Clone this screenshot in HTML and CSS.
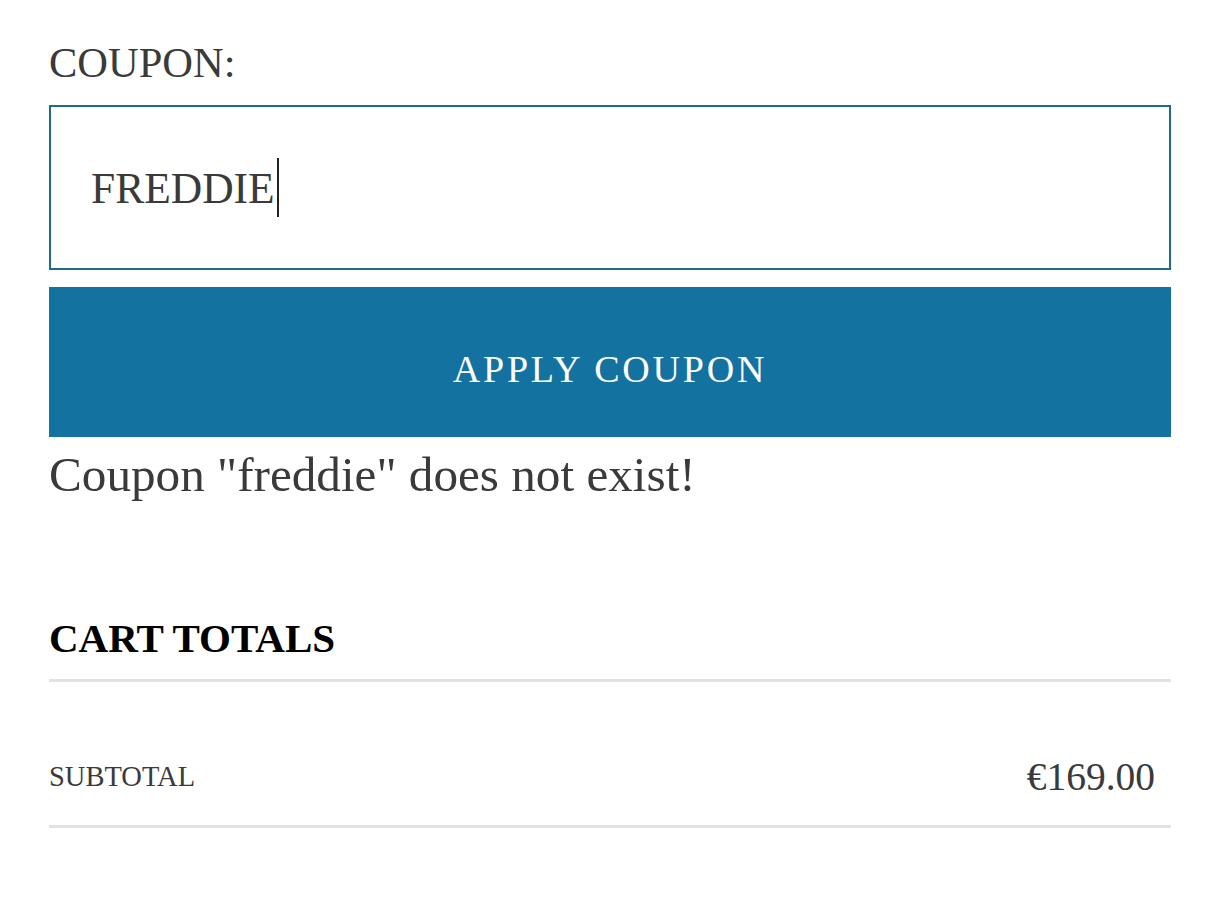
FILE: index.html
```html
<!DOCTYPE html>
<html lang="en">
<head>
<meta charset="utf-8">
<title>Cart</title>
<link rel="stylesheet" href="styles.css">
</head>
<body>
<main class="page">
  <section class="coupon">
    <label class="coupon-label" for="coupon">COUPON:</label>
    <div class="coupon-input"><span class="coupon-value">FREDDIE</span><span class="caret"></span></div>
    <button class="apply-btn" type="button">APPLY COUPON</button>
    <p class="coupon-msg">Coupon "freddie" does not exist!</p>
  </section>
  <section class="totals">
    <h2 class="totals-title">CART TOTALS</h2>
    <div class="totals-row">
      <span class="totals-key">SUBTOTAL</span>
      <span class="totals-val">€169.00</span>
    </div>
  </section>
</main>
</body>
</html>
```

FILE: styles.css
```css
html, body {
  margin: 0;
  padding: 0;
  background: #ffffff;
}
body {
  font-family: "Liberation Serif", "Times New Roman", serif;
  color: #3a3a3a;
}
.page {
  width: 1122px;
  margin-left: 49px;
  padding-top: 38px;
}
.coupon {
  display: flex;
  flex-direction: column;
}
.coupon-label {
  font-size: 42.5px;
  line-height: 50px;
  height: 50px;
}
.coupon-input {
  margin-top: 17px;
  height: 161px;
  border: 2px solid #1f6b8b;
  display: flex;
  align-items: center;
  padding-left: 40px;
  box-sizing: content-box;
}
.coupon-value {
  font-size: 43.5px;
  line-height: 60px;
}
.caret {
  display: inline-block;
  width: 2px;
  height: 59px;
  background: #222;
  margin-left: 2px;
}
.apply-btn {
  margin-top: 17px;
  height: 150px;
  border: 0;
  background: #1472a1;
  color: #ffffff;
  font-family: "Liberation Serif", "Times New Roman", serif;
  font-size: 38px;
  letter-spacing: 2.8px;
  padding: 14px 0 0;
}
.coupon-msg {
  margin: 10px 0 0;
  font-size: 49.2px;
  line-height: 56px;
}
.totals {
  margin-top: 110px;
}
.totals-title {
  margin: 0;
  font-size: 41px;
  line-height: 50px;
  font-weight: bold;
  color: #000;
  padding-bottom: 16px;
  border-bottom: 3px solid #e2e2de;
}
.totals-row {
  display: flex;
  justify-content: space-between;
  align-items: center;
  height: 146px;
  box-sizing: border-box;
  padding: 47px 16px 0 0;
  border-bottom: 3px solid #e2e2de;
}
.totals-key {
  font-size: 28.5px;
}
.totals-val {
  font-size: 39.5px;
}
```
